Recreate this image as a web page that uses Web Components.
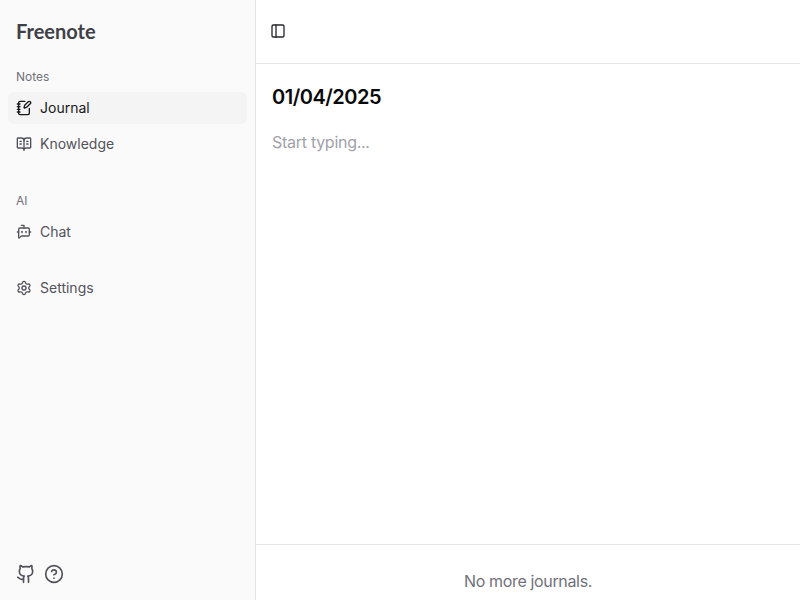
<!DOCTYPE html>
<html lang="en">
<head>
<meta charset="utf-8">
<title>Freenote</title>
<style>
    html, body { margin: 0; height: 100%; overflow: hidden; background: #fff; }
    body { font-family: Inter, "Liberation Sans", sans-serif; }
</style>
</head>
<body>
<app-shell>
    <app-sidebar slot="sidebar">
        <nav-group label="Notes">
            <nav-item icon="notebook" active>Journal</nav-item>
            <nav-item icon="book">Knowledge</nav-item>
        </nav-group>
        <nav-group label="AI">
            <nav-item icon="bot">Chat</nav-item>
        </nav-group>
        <nav-group>
            <nav-item icon="settings">Settings</nav-item>
        </nav-group>
    </app-sidebar>
    <journal-view date="01/04/2025"></journal-view>
</app-shell>

<script>
// lucide icon paths
const icons = {
    notebook: '<path d="M13.4 2H6a2 2 0 0 0-2 2v16a2 2 0 0 0 2 2h12a2 2 0 0 0 2-2v-7.4"/><path d="M2 6h4"/><path d="M2 10h4"/><path d="M2 14h4"/><path d="M2 18h4"/><path d="M21.378 5.626a1 1 0 1 0-3.004-3.004l-5.01 5.012a2 2 0 0 0-.506.854l-.837 2.87a.5.5 0 0 0 .62.62l2.87-.837a2 2 0 0 0 .854-.506z"/>',
    book: '<path d="M12 7v14"/><path d="M16 12h2"/><path d="M16 8h2"/><path d="M3 18a1 1 0 0 1-1-1V4a1 1 0 0 1 1-1h5a4 4 0 0 1 4 4 4 4 0 0 1 4-4h5a1 1 0 0 1 1 1v13a1 1 0 0 1-1 1h-6a3 3 0 0 0-3 3 3 3 0 0 0-3-3z"/><path d="M6 12h2"/><path d="M6 8h2"/>',
    bot: '<path d="M12 6V2H8"/><path d="M15 11v2"/><path d="M2 12h2"/><path d="M20 12h2"/><path d="M20 16a2 2 0 0 1-2 2H8.828a2 2 0 0 0-1.414.586l-2.202 2.202A.71.71 0 0 1 4 20.286V8a2 2 0 0 1 2-2h12a2 2 0 0 1 2 2z"/><path d="M9 11v2"/>',
    settings: '<path d="M9.671 4.136a2.34 2.34 0 0 1 4.659 0 2.34 2.34 0 0 0 3.319 1.915 2.34 2.34 0 0 1 2.33 4.033 2.34 2.34 0 0 0 0 3.831 2.34 2.34 0 0 1-2.33 4.033 2.34 2.34 0 0 0-3.319 1.915 2.34 2.34 0 0 1-4.659 0 2.34 2.34 0 0 0-3.32-1.915 2.34 2.34 0 0 1-2.33-4.033 2.34 2.34 0 0 0 0-3.831A2.34 2.34 0 0 1 6.35 6.051a2.34 2.34 0 0 0 3.319-1.915"/><circle cx="12" cy="12" r="3"/>',
    github: '<path d="M15 22v-4a4.8 4.8 0 0 0-1-3.5c3 0 6-2 6-5.5.08-1.25-.27-2.48-1-3.5.28-1.15.28-2.35 0-3.5 0 0-1 0-3 1.5-2.64-.5-5.36-.5-8 0C6 2 5 2 5 2c-.3 1.15-.3 2.35 0 3.5A5.403 5.403 0 0 0 4 9c0 3.5 3 5.5 6 5.5-.39.49-.68 1.05-.85 1.65-.17.6-.22 1.23-.15 1.85v4"/><path d="M9 18c-4.51 2-5-2-7-2"/>',
    help: '<circle cx="12" cy="12" r="10"/><path d="M9.09 9a3 3 0 0 1 5.83 1c0 2-3 3-3 3"/><path d="M12 17h.01"/>',
    panel: '<rect width="18" height="18" x="3" y="3" rx="2"/><path d="M9 3v18"/>'
};

function svgIcon(name, size) {
    return `<svg width="${size}" height="${size}" viewBox="0 0 24 24" fill="none" stroke="currentColor" stroke-width="2" stroke-linecap="round" stroke-linejoin="round">${icons[name]}</svg>`;
}

class AppShell extends HTMLElement {
    constructor() {
        super();
        this.attachShadow({ mode: 'open' });
        this.shadowRoot.innerHTML = `
            <style>
                :host { display: flex; height: 100vh; width: 100%; }
            </style>
            <slot name="sidebar"></slot>
            <slot></slot>
        `;
    }
}

class AppSidebar extends HTMLElement {
    constructor() {
        super();
        this.attachShadow({ mode: 'open' });
        this.shadowRoot.innerHTML = `
            <style>
                :host {
                    display: flex; flex-direction: column; flex: none;
                    width: 255px; height: 100%;
                    background: #fafafa; border-right: 1px solid #e5e5e5;
                }
                .brand {
                    padding: 16px; height: 60px; box-sizing: border-box;
                    font-family: Lato, Inter, sans-serif;
                    font-size: 20px; line-height: 30px; font-weight: 700; color: #3f3f46;
                }
                .groups { flex: 1; display: flex; flex-direction: column; gap: 8px; }
                .foot { display: flex; align-items: center; gap: 8px; padding: 0 16px 16px; color: #52525b; }
                .foot span { display: flex; }
            </style>
            <div class="brand">Freenote</div>
            <div class="groups"><slot></slot></div>
            <div class="foot">
                <span>${svgIcon('github', 20)}</span>
                <span>${svgIcon('help', 20)}</span>
            </div>
        `;
    }
}

class NavGroup extends HTMLElement {
    constructor() {
        super();
        this.attachShadow({ mode: 'open' });
        const label = this.getAttribute('label');
        this.shadowRoot.innerHTML = `
            <style>
                :host { display: flex; flex-direction: column; gap: 4px; padding: 0 8px 8px; }
                :host(:not(:first-child)) { padding-top: 8px; }
                .label {
                    height: 32px; margin-bottom: -4px; padding: 1px 8px 0; box-sizing: border-box;
                    line-height: 32px; font-size: 12px; font-weight: 400; color: #71717a;
                }
            </style>
            ${label ? `<div class="label">${label}</div>` : ''}
            <slot></slot>
        `;
    }
}

class NavItem extends HTMLElement {
    constructor() {
        super();
        this.attachShadow({ mode: 'open' });
        this.shadowRoot.innerHTML = `
            <style>
                :host {
                    display: flex; align-items: center; gap: 8px;
                    height: 32px; padding: 0 8px; border-radius: 6px;
                    font-size: 14px; font-weight: 400; color: #52525b;
                }
                :host([active]) { background: #f4f4f5; color: #18181b; }
                svg { display: block; flex: none; }
                .text { padding-bottom: 1px; }
            </style>
            ${svgIcon(this.getAttribute('icon'), 16)}
            <span class="text"><slot></slot></span>
        `;
    }
}

class JournalView extends HTMLElement {
    constructor() {
        super();
        this.attachShadow({ mode: 'open' });
        this.shadowRoot.innerHTML = `
            <style>
                :host { display: flex; flex-direction: column; flex: 1; min-width: 0; height: 100%; background: #fff; }
                header {
                    flex: none; display: flex; align-items: center; box-sizing: border-box;
                    height: 64px; padding: 0 14px 1px; border-bottom: 1px solid #e5e5e5; color: #27272a;
                }
                header svg { display: block; }
                main { flex: 1; padding: 17px 16px 16px; }
                h1 { margin: 0; font-size: 20px; line-height: 32px; font-weight: 600; letter-spacing: -0.5px; color: #09090b; }
                .editor { margin-top: 17px; font-size: 16px; line-height: 24px; letter-spacing: -0.28px; color: #a1a1aa; }
                footer {
                    flex: none; box-sizing: border-box; height: 56px; padding-top: 24px;
                    border-top: 1px solid #e5e5e5; text-align: center;
                    font-size: 16px; line-height: 24px; letter-spacing: -0.35px; color: #71717a;
                }
            </style>
            <header>${svgIcon('panel', 16)}</header>
            <main>
                <h1>${this.getAttribute('date')}</h1>
                <div class="editor">Start typing...</div>
            </main>
            <footer>No more journals.</footer>
        `;
    }
}

customElements.define('app-shell', AppShell);
customElements.define('app-sidebar', AppSidebar);
customElements.define('nav-group', NavGroup);
customElements.define('nav-item', NavItem);
customElements.define('journal-view', JournalView);
</script>
</body>
</html>
